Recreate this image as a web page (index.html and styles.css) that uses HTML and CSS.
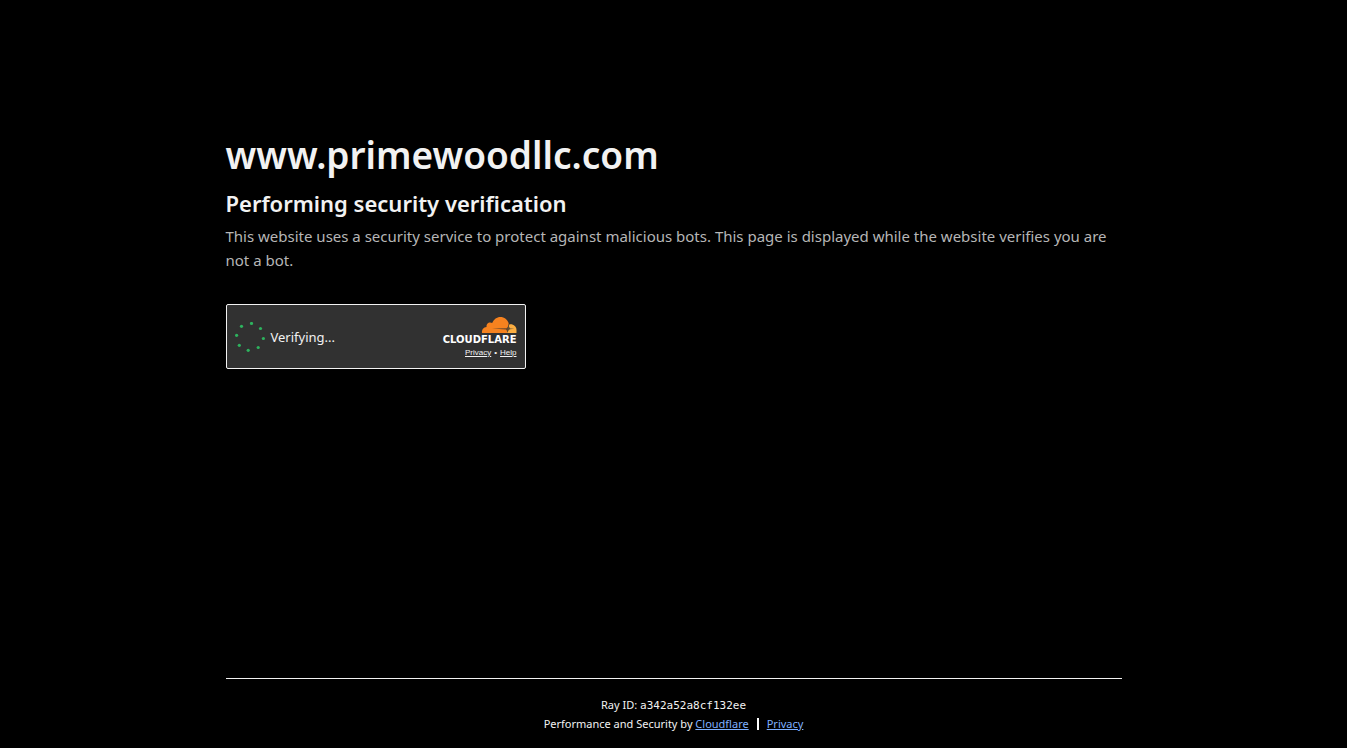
FILE: index.html
```
<!DOCTYPE html>
<html lang="en">
<head>
    <meta charset="UTF-8">
    <meta name="viewport" content="width=device-width, initial-scale=1.0">
    <title>Just a moment...</title>
    <link rel="stylesheet" href="styles.css">
</head>
<body>
    <main class="main-content">
        <h1>www.primewoodllc.com</h1>
        <h2>Performing security verification</h2>
        <p class="description">This website uses a security service to protect against malicious bots. This page is displayed while the website verifies you are not a bot.</p>

        <div class="widget">
            <div class="status" role="status">
                <svg class="spinner" viewBox="0 0 30 30" aria-hidden="true">
                    <circle cx="16.5" cy="1.5" r="1.6"/>
                    <circle cx="25.5" cy="6.5" r="1.6"/>
                    <circle cx="28.4" cy="16.5" r="1.6"/>
                    <circle cx="23.2" cy="25.5" r="1.6"/>
                    <circle cx="13.2" cy="28.3" r="1.6"/>
                    <circle cx="4.3" cy="23.3" r="1.6"/>
                    <circle cx="1.6" cy="13.3" r="1.6"/>
                    <circle cx="6.5" cy="4.3" r="1.6"/>
                </svg>
                <span>Verifying...</span>
            </div>
            <div class="branding">
                <svg class="cloud" viewBox="0 0 36 16" aria-hidden="true">
                    <path fill="#fbad41" d="M28.5 7.300C32.500 6.800 35.500 9.500 35.500 13v2.500q0 .5-.5.5H24z"/>
                    <path fill="#f6821f" d="M1 16c-.4-3.200 1.400-5.600 4.600-5.900C5 6.700 8.200 4.300 11.200 6 12.800 2.300 15.900 0 19.300 0c4.100 0 7.200 2.500 8.400 6.300l-1.500 9.700z"/>
                    <path fill="#313131" fill-opacity=".75" d="M11 11.600l14.500-.3q1.300-.5 1.900-3.300.6 2.700 1.900 3.400l4 .4-4.300.5q-1.700.7-2.700 3.700-.2-2.800-1.300-3.600z"/>
                </svg>
                <span class="wordmark">CLOUDFLARE</span>
                <div class="terms">
                    <a href="#">Privacy</a>
                    <span>•</span>
                    <a href="#">Help</a>
                </div>
            </div>
        </div>
    </main>

    <footer class="footer">
        <div class="footer-inner">
            <div>Ray ID: <code>a342a52a8cf132ee</code></div>
            <div class="footer-links">
                <span>Performance and Security by <a href="#">Cloudflare</a></span>
                <span class="divider"></span>
                <a href="#">Privacy</a>
            </div>
        </div>
    </footer>
</body>
</html>
```

FILE: styles.css
```
* {
    box-sizing: border-box;
    margin: 0;
    padding: 0;
}
body {
    display: flex;
    flex-direction: column;
    min-height: 100vh;
    background: #000;
    color: #f2f2f2;
    font-family: "Segoe UI", "Noto Sans", sans-serif;
}
.main-content {
    flex: 1;
    width: 100%;
    max-width: 960px;
    margin: 0 auto;
    padding: 128px 32px 32px;
}
h1 {
    font-size: 37px;
    font-weight: 600;
    line-height: 54px;
}
h2 {
    font-size: 22px;
    font-weight: 600;
    line-height: 42px;
}
.description {
    margin-bottom: 32px;
    color: #b6b6b6;
    font-size: 15px;
    line-height: 24px;
}
.widget {
    display: flex;
    align-items: center;
    justify-content: space-between;
    width: 300px;
    height: 65px;
    padding: 0 8px;
    border: 1px solid #f2f2f2;
    border-radius: 2px;
    background: #313131;
}
.status {
    display: flex;
    align-items: center;
    gap: 6px;
    font-size: 13px;
}
.spinner {
    width: 30px;
    height: 30px;
    fill: #2db35e;
}
.branding {
    display: flex;
    flex-direction: column;
    align-items: flex-end;
    padding-top: 3px;
}
.cloud {
    width: 36px;
    height: 16px;
    margin-bottom: 1px;
}
.wordmark {
    font-family: "DejaVu Sans", sans-serif;
    font-size: 10px;
    font-weight: 700;
    line-height: 12px;
    color: #fff;
}
.terms {
    display: flex;
    gap: 3px;
    font-family: "Liberation Sans", sans-serif;
    font-size: 8px;
    line-height: 14px;
}
.terms a {
    color: #f2f2f2;
}
.footer {
    width: 100%;
    max-width: 960px;
    margin: 0 auto;
    padding: 0 32px;
    font-size: 11px;
    line-height: 18px;
    text-align: center;
}
.footer-inner {
    padding: 17px 0 15px;
    border-top: 1px solid #f2f2f2;
}
.footer code {
    font-family: "Lucida Console", "DejaVu Sans Mono", monospace;
    font-size: 11px;
}
.footer-links {
    display: flex;
    justify-content: center;
    align-items: center;
    gap: 8px;
}
.footer a {
    color: #7fb0ff;
}
.divider {
    width: 2px;
    height: 12px;
    background: #fff;
}
```
